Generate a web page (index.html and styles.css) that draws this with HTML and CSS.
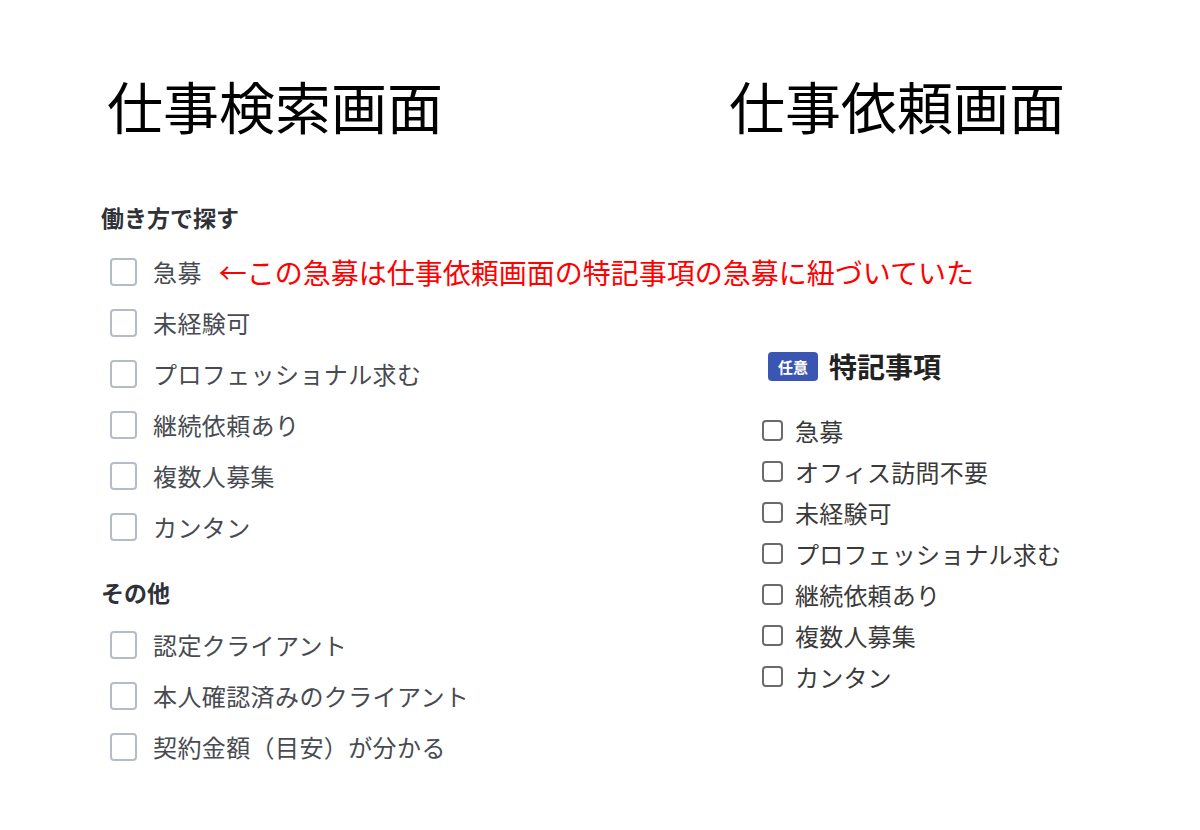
FILE: index.html
```html
<!DOCTYPE html>
<html lang="ja">
<head>
    <meta charset="UTF-8">
    <meta name="viewport" content="width=device-width, initial-scale=1.0">
    <title>仕事検索画面 / 仕事依頼画面</title>
    <link rel="stylesheet" href="styles.css">
</head>
<body>
    <div class="page">
        <div class="column search">
            <h1 class="screen-title">仕事検索画面</h1>

            <h2 class="group-title first">働き方で探す</h2>
            <ul class="check-list">
                <li class="check-row">
                    <span class="box"></span><span class="label">急募</span>
                    <span class="note">←この急募は仕事依頼画面の特記事項の急募に紐づいていた</span>
                </li>
                <li class="check-row"><span class="box"></span><span class="label">未経験可</span></li>
                <li class="check-row"><span class="box"></span><span class="label">プロフェッショナル求む</span></li>
                <li class="check-row"><span class="box"></span><span class="label">継続依頼あり</span></li>
                <li class="check-row"><span class="box"></span><span class="label">複数人募集</span></li>
                <li class="check-row"><span class="box"></span><span class="label">カンタン</span></li>
            </ul>

            <h2 class="group-title">その他</h2>
            <ul class="check-list other">
                <li class="check-row"><span class="box"></span><span class="label">認定クライアント</span></li>
                <li class="check-row"><span class="box"></span><span class="label">本人確認済みのクライアント</span></li>
                <li class="check-row"><span class="box"></span><span class="label">契約金額（目安）が分かる</span></li>
            </ul>
        </div>

        <div class="column request">
            <h1 class="screen-title">仕事依頼画面</h1>

            <div class="field-head">
                <span class="badge">任意</span>
                <span class="field-title">特記事項</span>
            </div>
            <ul class="field-list">
                <li class="field-row"><span class="small-box"></span>急募</li>
                <li class="field-row"><span class="small-box"></span>オフィス訪問不要</li>
                <li class="field-row"><span class="small-box"></span>未経験可</li>
                <li class="field-row"><span class="small-box"></span>プロフェッショナル求む</li>
                <li class="field-row"><span class="small-box"></span>継続依頼あり</li>
                <li class="field-row"><span class="small-box"></span>複数人募集</li>
                <li class="field-row"><span class="small-box"></span>カンタン</li>
            </ul>
        </div>
    </div>
</body>
</html>
```

FILE: styles.css
```css
body {
    margin: 0;
    background: #ffffff;
    font-family: "Noto Sans CJK JP", "Noto Sans", sans-serif;
    color: #333333;
}
.page {
    display: grid;
    grid-template-columns: 628px 1fr;
    padding: 77px 0 40px 101px;
}
ul {
    list-style: none;
    margin: 0;
    padding: 0;
}
.screen-title {
    margin: 0;
    font-size: 56px;
    line-height: 56px;
    font-weight: normal;
    color: #000000;
    padding-left: 6px;
}

/* search screen filters */
.group-title {
    margin: 24px 0 0;
    font-size: 23px;
    line-height: 32px;
    font-weight: bold;
    color: #2f3237;
}
.group-title.first {
    margin-top: 68px;
}
.check-list {
    margin-top: 13px;
}
.check-list.other {
    margin-top: 11px;
}
.check-row {
    display: flex;
    align-items: center;
    height: 51px;
    padding-left: 9px;
}
.check-list.other .check-row {
    height: 51px;
}
.box {
    width: 23px;
    height: 24px;
    border: 2px solid #b5bcc7;
    border-radius: 4px;
    flex-shrink: 0;
}
.label {
    margin-left: 16px;
    font-size: 24px;
    letter-spacing: 0.4px;
    color: #474b51;
    white-space: nowrap;
}
.note {
    margin-left: 17px;
    font-size: 28px;
    color: #ff0000;
    white-space: nowrap;
}

/* request screen field */
.request {
    padding-left: 33px;
}
.request .screen-title {
    margin-left: -33px;
    padding-left: 0;
}
.field-head {
    display: flex;
    align-items: center;
    gap: 11px;
    margin-top: 215px;
    height: 36px;
}
.badge {
    margin-left: 6px;
    background: #3b56b2;
    color: #ffffff;
    font-size: 15px;
    font-weight: bold;
    line-height: 29px;
    padding: 0 10px;
    border-radius: 4px;
}
.field-title {
    font-size: 28px;
    font-weight: bold;
    color: #222222;
}
.field-list {
    margin-top: 26px;
}
.field-row {
    display: flex;
    align-items: center;
    height: 41px;
    font-size: 24px;
    color: #3a3a3a;
    letter-spacing: 0.2px;
    white-space: nowrap;
}
.small-box {
    width: 17px;
    height: 17px;
    border: 2px solid #6b6b6b;
    border-radius: 4px;
    margin-right: 12px;
    flex-shrink: 0;
}
```
